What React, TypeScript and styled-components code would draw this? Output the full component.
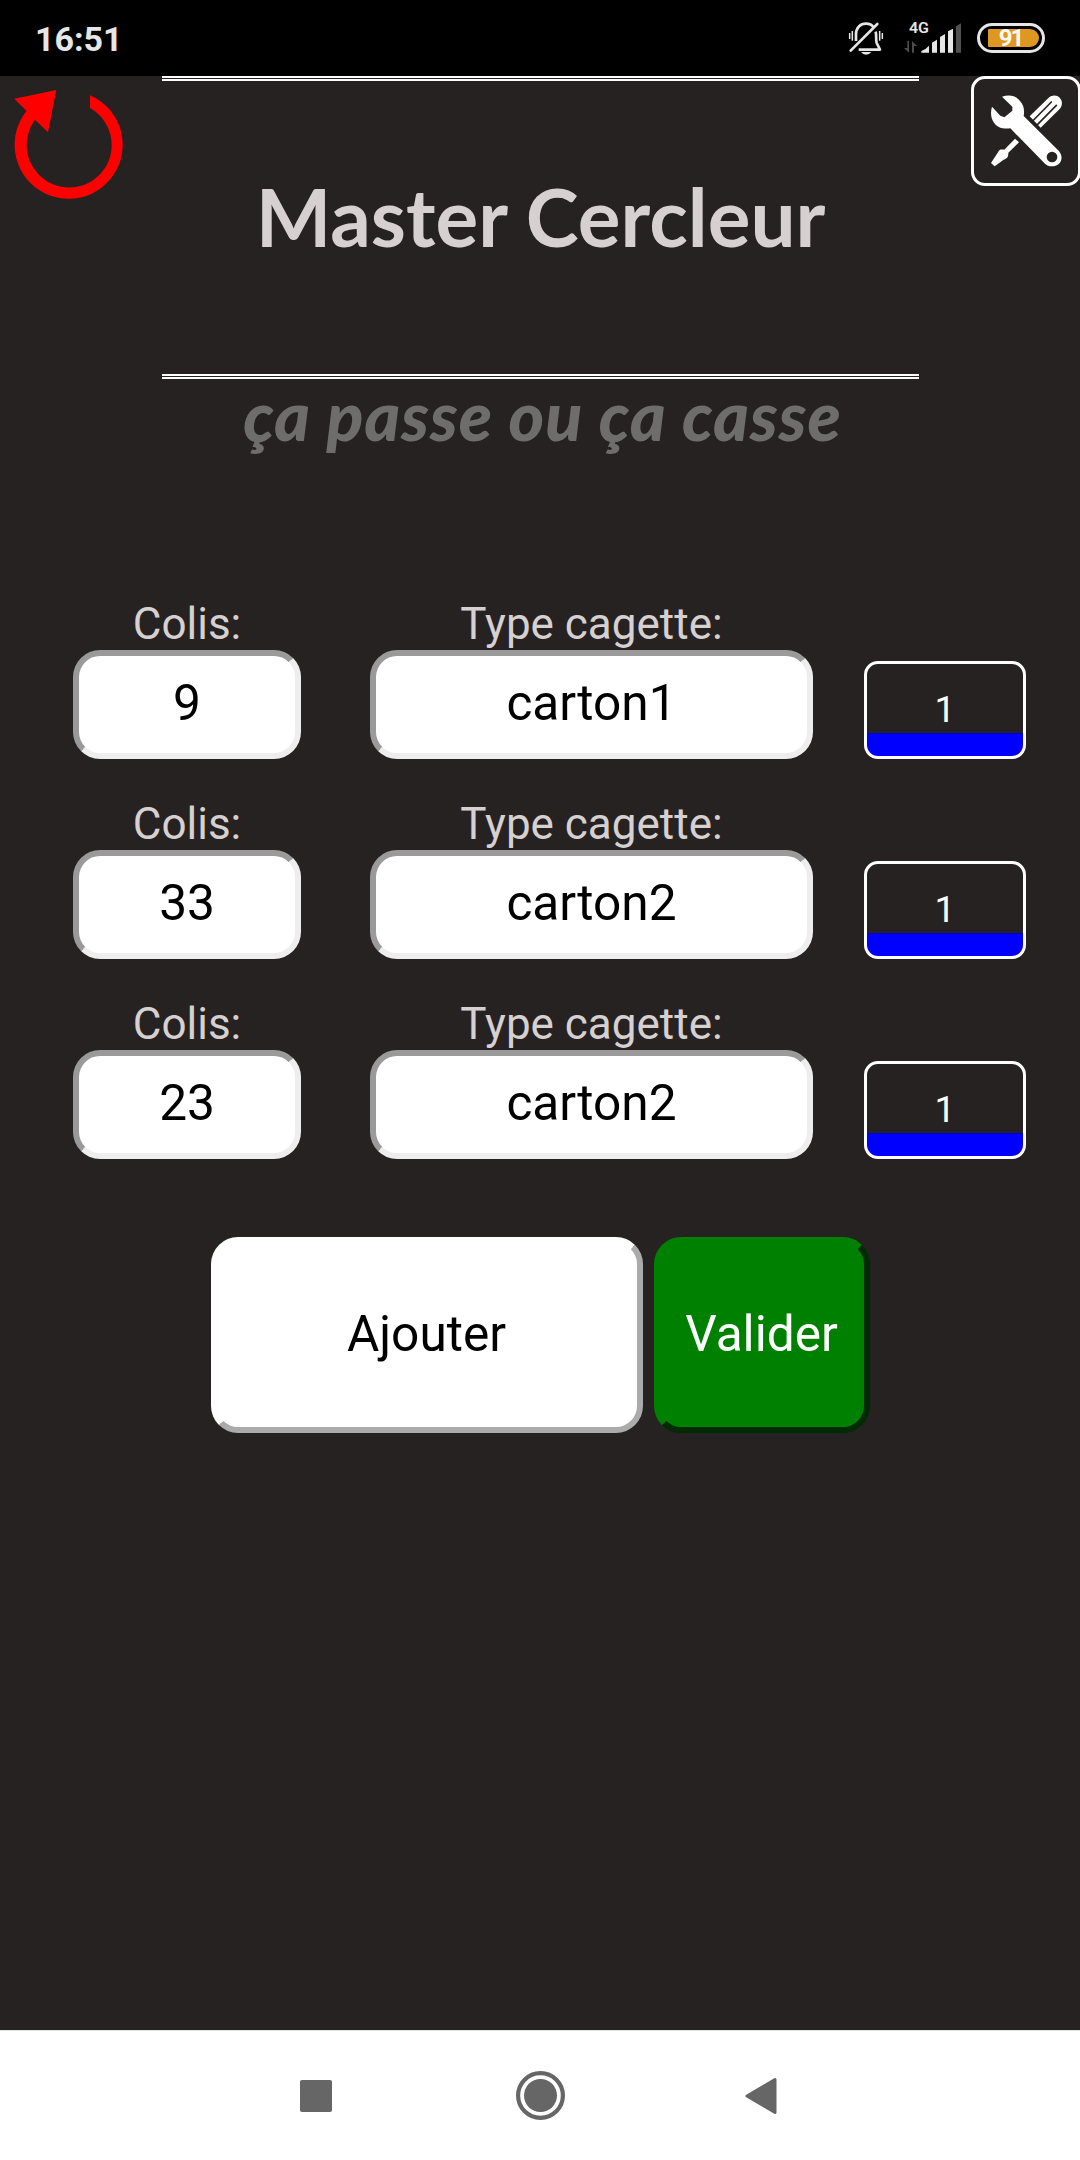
import React from "react";
import styled, { createGlobalStyle } from "styled-components";

const GlobalStyle = createGlobalStyle`
  * { box-sizing: border-box; }
  body { margin: 0; background: #262222; }
  button { margin: 0; padding: 0; font: inherit; }
`;

const Screen = styled.div`
  width: 1080px;
  height: 2160px;
  display: flex;
  flex-direction: column;
  overflow: hidden;
  background: #262222;
  color: #d6d1d0;
  font-family: Roboto, "Liberation Sans", sans-serif;
`;

const StatusBar = styled.div`
  flex: none;
  height: 76px;
  padding: 0 35px;
  display: flex;
  align-items: center;
  background: #000;
  color: #e6e6e6;
`;

const Clock = styled.div`
  margin-right: auto;
  padding-top: 2px;
  font-size: 34px;
  font-weight: 700;
  line-height: 40px;
`;

const BellSvg = styled.svg`
  width: 36px;
  height: 34px;
  margin-right: 19px;
`;

const SignalSvg = styled.svg`
  width: 59px;
  height: 34px;
  margin-right: 15px;
  overflow: visible;
  font-family: Roboto, sans-serif;
`;

const Battery = styled.div`
  width: 68px;
  height: 30px;
  border: 3px solid #e6e6e6;
  border-radius: 15px;
  padding: 3px 3px 3px 8px;
`;

const Charge = styled.div`
  height: 18px;
  border-radius: 1px 9px 9px 1px;
  background: #de9821;
  color: #fff8ee;
  font-size: 24px;
  font-weight: 700;
  letter-spacing: -2px;
  line-height: 19px;
  padding-right: 6px;
  text-align: center;
`;

const Header = styled.header`
  flex: none;
  width: 1081px;
  display: flex;
  justify-content: space-between;
  align-items: flex-start;
`;

const Side = styled.div<{ $end?: boolean }>`
  width: 162px;
  display: flex;
  justify-content: ${(p) => (p.$end ? "flex-end" : "flex-start")};
`;

const ResetButton = styled.button`
  width: 138px;
  height: 138px;
  border: 0;
  background: none;
  svg { display: block; width: 138px; height: 138px; }
`;

const SettingsButton = styled.button`
  width: 110px;
  height: 110px;
  display: flex;
  align-items: center;
  justify-content: center;
  border: 3px solid #fff;
  border-radius: 14px;
  background: none;
  svg { width: 73px; height: 73px; margin-top: -2px; }
`;

const Banner = styled.div`
  width: 757px;
  height: 303px;
  border-top: 5px double #fff;
  border-bottom: 5px double #fff;
  display: flex;
  justify-content: center;
  padding-top: 75px;
`;

const Title = styled.h1`
  margin: 0;
  font-family: Lato, sans-serif;
  font-size: 80px;
  font-weight: 700;
  letter-spacing: 0;
  line-height: 120px;
  white-space: nowrap;
`;

const Tagline = styled.p`
  flex: none;
  margin: 0;
  height: 219px;
  padding: 0 0 0 5px;
  text-align: center;
  white-space: nowrap;
  font-family: Lato, sans-serif;
  font-size: 68px;
  font-weight: 900;
  font-style: italic;
  letter-spacing: 1px;
  line-height: 72px;
  color: #6f6d6b;
`;

const Rows = styled.div`
  display: flex;
  flex-direction: column;
  gap: 39px;
  padding-left: 73px;
`;

const Row = styled.div`
  height: 161px;
  display: flex;
  align-items: flex-end;
`;

const Field = styled.label<{ $width: number; $gap: number }>`
  width: ${(p) => p.$width}px;
  margin-right: ${(p) => p.$gap}px;
  display: flex;
  flex-direction: column;
  font-size: 44px;
  line-height: 52px;
  text-align: center;
`;

const Value = styled.span`
  height: 109px;
  border: 6px solid;
  border-color: #9a9a9a #eee #eee #9a9a9a;
  border-radius: 27px;
  background: #fff;
  color: #000;
  font-size: 49.6px;
  line-height: 94px;
`;

const Counter = styled.button`
  width: 162px;
  height: 98px;
  border: 3px solid #fff;
  border-radius: 14px;
  background: linear-gradient(to bottom, transparent 72px, #0000a0 72px, #00f 73px) #262222;
  background-origin: border-box;
  color: #fff;
  font-size: 37px;
  line-height: 92px;
  text-align: center;
`;

const Actions = styled.div`
  margin-top: 78px;
  display: flex;
  justify-content: center;
  gap: 11px;
`;

const ActionButton = styled.button<{ $width: number; $face: string; $edge: string; $ink: string }>`
  width: ${(p) => p.$width}px;
  height: 196px;
  border: 6px solid;
  border-color: ${(p) => `${p.$face} ${p.$edge} ${p.$edge} ${p.$face}`};
  border-radius: 27px;
  background: ${(p) => p.$face};
  color: ${(p) => p.$ink};
  font-size: 49.6px;
  padding-bottom: 2px;
`;

const NavBar = styled.nav`
  flex: none;
  height: 130px;
  margin-top: auto;
  border-top: 1px solid #e4e2e2;
  background: #fff;
  display: flex;
  justify-content: space-between;
  align-items: center;
  padding: 0 303px 0 300px;
`;

const RecentKey = styled.div`
  width: 32px;
  height: 32px;
  border-radius: 2px;
  background: #666;
`;

const HomeKey = styled.svg`
  width: 49px;
  height: 49px;
  margin-left: 4px;
`;

const BackKey = styled.svg`
  width: 32px;
  height: 38px;
`;

const Bell = () => (
  <BellSvg viewBox="84 61 108 102" fill="none" stroke="#e6e6e6">
    <path strokeWidth="8" d="M108 121V101C108 81 121 69 138 69C149 69 157 74 161 80" />
    <path strokeWidth="8" strokeLinejoin="round" d="M167 93C170 104 167 118 170 127L180 147H116" />
    <path strokeWidth="8" strokeLinecap="round" d="M92 150L172 70" />
    <path strokeWidth="4.5" d="M89 97V115M97 91V120M179 91V120M187 97V115" />
    <path fill="#e6e6e6" stroke="none" d="M123 154H154Q148 162 138 162Q129 162 123 154Z" />
  </BellSvg>
);

const Signal = () => (
  <SignalSvg viewBox="249 61 177 102">
    <text x="267" y="98" fontSize="45" fontWeight="600" fill="#e6e6e6" textLength="60" lengthAdjust="spacingAndGlyphs">4G</text>
    <g fill="#e6e6e6">
      <path d="M304 156V151Q317 147 327 135V156Z" />
      <path d="M336 156V126L351 117V156Z" />
      <path d="M360 156V109L375 100V156Z" />
      <path d="M384 156V92L399 84V156Z" />
    </g>
    <path fill="#505050" d="M408 156V77L423 68V156Z" />
    <path fill="#4c4c4c" d="M262 121H267V156L252 142H262ZM276 156V121L291 136H282V156Z" />
  </SignalSvg>
);

const ResetIcon = () => (
  <svg viewBox="0 76 138 138">
    <path
      fill="#f00"
      d="M90 95.2A54 54 0 1 1 26.5 111L14.3 98.7L56.3 90L48 132.3L35 119.8A42.5 42.5 0 1 0 90 108Z"
    />
  </svg>
);

const ToolsIcon = () => (
  <svg viewBox="510 280 219 219">
    <path fill="#fff" d="M629 347L686 291C696 282 711 282 719 291C728 300 728 315 719 325L662 381Z" />
    <path stroke="#262222" strokeWidth="5" strokeLinecap="round" fill="none" d="M638 361L694 304M650 374L709 314" />
    <path
      fill="#fff"
      d="M585 414L597 425L565 456C565 470 562 472 551 477L524 497L513 487L534 455C538 446 543 446 553 447Z"
    />
    <path
      fill="#fff"
      fillRule="evenodd"
      d="M546 288C568 281 588 285 600 301C612 314 614 329 611 346L716 450C736 474 718 497 696 497C686 497 680 494 675 489L571 383C550 386 533 381 522 366C512 353 511 334 516 318L541 345L553 350L577 330V318ZM712 469A16 16 0 1 0 680 469A16 16 0 1 0 712 469Z"
    />
  </svg>
);

const parcels = [
  { count: "9", crate: "carton1" },
  { count: "33", crate: "carton2" },
  { count: "23", crate: "carton2" },
];

export default function App() {
  return (
    <Screen>
      <GlobalStyle />
      <StatusBar>
        <Clock>16:51</Clock>
        <Bell />
        <Signal />
        <Battery>
          <Charge>91</Charge>
        </Battery>
      </StatusBar>

      <Header>
        <Side>
          <ResetButton aria-label="Recommencer">
            <ResetIcon />
          </ResetButton>
        </Side>
        <Banner>
          <Title>Master Cercleur</Title>
        </Banner>
        <Side $end>
          <SettingsButton aria-label="Réglages">
            <ToolsIcon />
          </SettingsButton>
        </Side>
      </Header>
      <Tagline>ça passe ou ça casse</Tagline>

      <Rows>
        {parcels.map((p, i) => (
          <Row key={i}>
            <Field $width={228} $gap={69}>
              Colis:
              <Value>{p.count}</Value>
            </Field>
            <Field $width={443} $gap={51}>
              Type cagette:
              <Value>{p.crate}</Value>
            </Field>
            <Counter>1</Counter>
          </Row>
        ))}
      </Rows>

      <Actions>
        <ActionButton $width={432} $face="#fff" $edge="#ababab" $ink="#000">
          Ajouter
        </ActionButton>
        <ActionButton $width={216} $face="#008000" $edge="#002b00" $ink="#fff">
          Valider
        </ActionButton>
      </Actions>

      <NavBar>
        <RecentKey />
        <HomeKey viewBox="0 0 49 49">
          <circle cx="24.5" cy="24.5" r="22.4" fill="none" stroke="#666" strokeWidth="4.2" />
          <circle cx="24.5" cy="24.5" r="16.5" fill="#666" />
        </HomeKey>
        <BackKey viewBox="0 0 32 38">
          <path d="M2 19L30 2.5V35.5Z" fill="#666" stroke="#666" strokeWidth="3" strokeLinejoin="round" />
        </BackKey>
      </NavBar>
    </Screen>
  );
}
